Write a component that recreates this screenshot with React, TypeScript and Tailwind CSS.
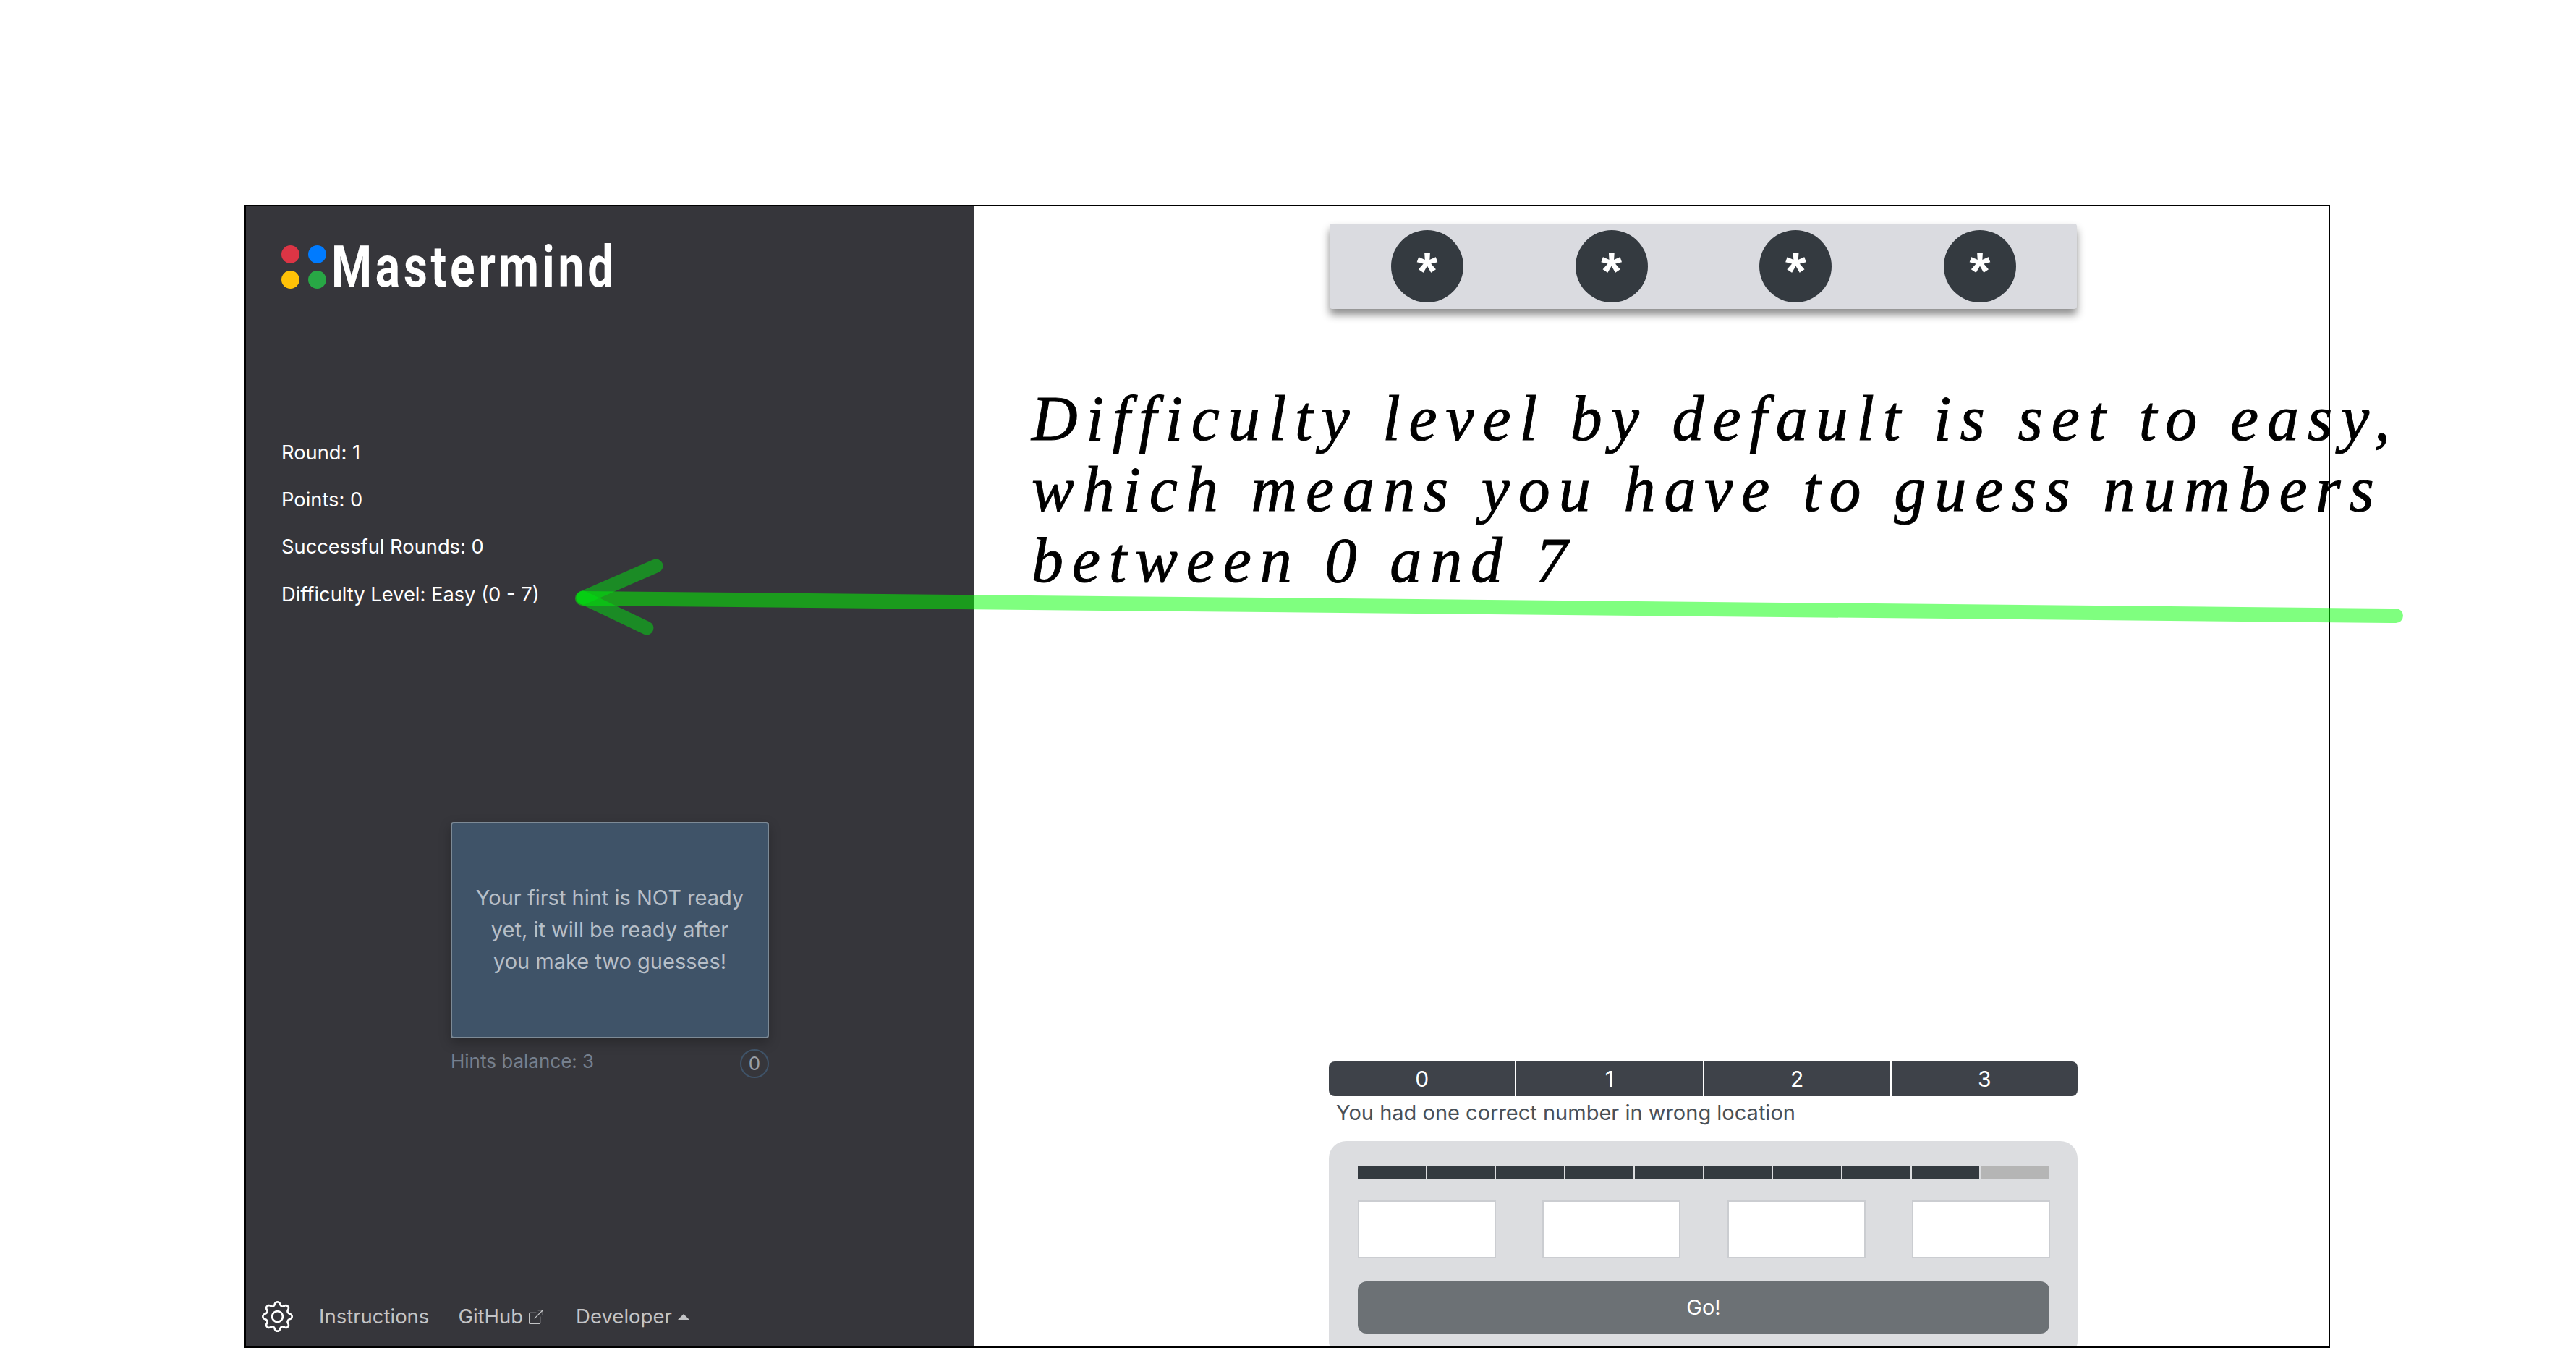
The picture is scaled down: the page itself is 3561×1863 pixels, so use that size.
import { BsGear, BsBoxArrowUpRight } from "react-icons/bs";

const stats = ["Round: 1", "Points: 0", "Successful Rounds: 0", "Difficulty Level: Easy (0 - 7)"];
const handwriting = [
  "Difficulty level by default is set to easy,",
  "which means you have to guess numbers",
  "between 0 and 7",
];

export default function App() {
  return (
    <div className="relative h-[1863px] w-[3561px] overflow-hidden bg-white pl-[337px] pt-[283px] font-['Inter',sans-serif]">
      <div className="flex h-[1580px] w-[2884px] overflow-hidden border-b-[3px] border-l-[3px] border-r-2 border-t-2 border-black">
        <aside className="flex w-[1007px] shrink-0 flex-col bg-[#36363b] pl-[49px]">
          <div className="mt-[44px] flex items-center">
            <div className="grid grid-cols-2 gap-x-[12px] gap-y-[10px]">
              <span className="h-[25px] w-[25px] rounded-full bg-[#dc3545]" />
              <span className="h-[25px] w-[25px] rounded-full bg-[#007bff]" />
              <span className="h-[25px] w-[25px] rounded-full bg-[#ffc107]" />
              <span className="h-[25px] w-[25px] rounded-full bg-[#28a745]" />
            </div>
            <span className="ml-[7px] inline-block origin-left scale-x-[0.8] whitespace-nowrap font-['Roboto',sans-serif] text-[80px] font-bold leading-[80px] tracking-[6px] text-white">
              Mastermind
            </span>
          </div>
          <div className="mt-[184px] text-[27.3px] leading-[65.2px] text-white">
            {stats.map((s) => (
              <div key={s}>{s}</div>
            ))}
          </div>
          <div className="ml-[234px] mt-[282px] w-[440px]">
            <div className="flex h-[299px] items-center justify-center rounded-[4px] border-2 border-[#7d8a96] bg-[#3f5368] px-[32px] text-center text-[29px] leading-[44px] text-[#b7bfc8] shadow-[0_6px_16px_rgba(0,0,0,0.25)]">
              Your first hint is NOT ready yet, it will be ready after you make two guesses!
            </div>
            <div className="mt-[15px] flex items-center justify-between">
              <span className="-mt-[6px] text-[26px] text-[#76808e]">Hints balance: 3</span>
              <span className="flex h-[40px] w-[40px] items-center justify-center rounded-full border-2 border-[#3f5368] text-[26px] text-[#9a9fa6]">
                0
              </span>
            </div>
          </div>
          <div className="-ml-[27px] mb-[19px] mt-auto flex items-center text-[27.5px] text-[#c3c4c6]">
            <BsGear className="h-[43px] w-[43px] text-white" />
            <span className="ml-[36px]">Instructions</span>
            <span className="ml-[40px]">GitHub</span>
            <BsBoxArrowUpRight className="ml-[8px] h-[20px] w-[20px]" />
            <span className="ml-[45px]">Developer</span>
            <span className="ml-[8px] h-0 w-0 border-x-[8px] border-b-[8px] border-x-transparent border-b-[#c3c4c6]" />
          </div>
        </aside>
        <main className="flex flex-1 flex-col bg-white pl-[490px]">
          <div className="ml-[1px] mt-[24px] flex h-[118px] w-[1033px] shrink-0 items-center justify-between rounded-[4px] bg-[#dadbe0] pl-[85px] pr-[84px] shadow-[0_8px_12px_rgba(0,0,0,0.45)]">
            {[0, 1, 2, 3].map((i) => (
              <span key={i} className="flex h-[100px] w-[100px] items-center justify-center rounded-full bg-[#343a40] pt-[14px] font-['Liberation_Sans',sans-serif] text-[74px] font-bold leading-none text-white">
                *
              </span>
            ))}
          </div>
          <div className="mt-[1040px] flex h-[48px] w-[1035px] shrink-0 overflow-hidden rounded-[8px] bg-[#3e4249] text-[30px] text-white">
            {[0, 1, 2, 3].map((n) => (
              <div key={n} className="flex flex-1 items-center justify-center border-r-2 border-white last:border-r-0">
                {n}
              </div>
            ))}
          </div>
          <div className="ml-[10px] mt-[4px] text-[29px] leading-[38px] text-[#495057]">You had one correct number in wrong location</div>
          <div className="mt-[20px] h-[300px] w-[1035px] shrink-0 rounded-[24px] bg-[#dcdde0] px-[40px] pt-[34px]">
            <div className="flex h-[18px] w-[955px]">
              {[0, 1, 2, 3, 4, 5, 6, 7, 8].map((i) => (
                <div key={i} className="flex-1 border-r-2 border-[#dcdde0] bg-[#343a40]" />
              ))}
              <div className="flex-1 bg-[#b5b5b5]" />
            </div>
            <div className="mt-[30px] flex w-[957px] justify-between">
              {[0, 1, 2, 3].map((i) => (
                <div key={i} className="h-[80px] w-[191px] border-2 border-[#cbcdd1] bg-white" />
              ))}
            </div>
            <button className="mt-[32px] flex h-[72px] w-[956px] items-center justify-center rounded-[12px] bg-[#6c7175] text-[29px] text-white">
              Go!
            </button>
          </div>
        </main>
      </div>
      <div className="absolute left-[1426px] top-[530px] whitespace-nowrap font-['Liberation_Serif',cursive] text-[88px] italic leading-[98px] tracking-[11.9px] text-black [-webkit-text-stroke:1px_black]">
        {handwriting.map((l) => (
          <div key={l}>{l}</div>
        ))}
      </div>
      <svg className="absolute left-0 top-0" width="3561" height="1863" fill="none" strokeLinecap="round">
        <path d="M3312 851 L805 827" stroke="#00ff00" strokeOpacity="0.5" strokeWidth="20" />
        <path d="M907 782 L806 826" stroke="#00e010" strokeOpacity="0.5" strokeWidth="19" />
        <path d="M894 868 L806 826" stroke="#00e010" strokeOpacity="0.5" strokeWidth="19" />
      </svg>
    </div>
  );
}
